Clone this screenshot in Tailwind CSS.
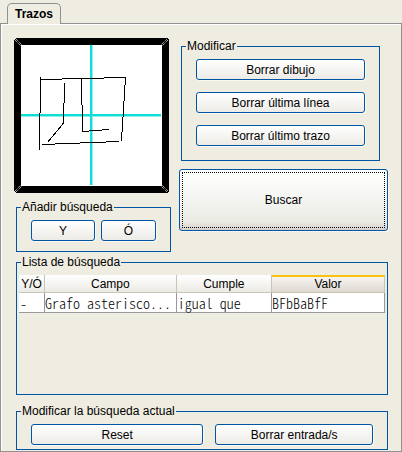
<!DOCTYPE html>
<html lang="es">
<head>
<meta charset="utf-8">
<title>Trazos</title>
<script src="https://cdn.jsdelivr.net/npm/@tailwindcss/browser@4"></script>
</head>
<body class="flex min-h-screen flex-col bg-[#efede1] pt-[3px] font-['Liberation_Sans',Arial,sans-serif] text-xs leading-[15px] text-black">
  <div role="tablist" class="relative z-10 -mb-px flex pl-[7px]">
    <button role="tab" aria-selected="true" class="h-[21px] rounded-t-[5px] border border-b-0 border-[#919191] bg-[#efede1] px-[7px] font-bold">Trazos</button>
  </div>
  <main role="tabpanel" class="flex grow flex-col border border-[#919191] pt-[14px] pr-[13px] pb-px pl-[13px] shadow-[inset_1px_1px_0_#fff]">
    <div class="grid grid-cols-[157px_1fr] gap-x-2">
      <div class="flex flex-col gap-[7px]">
        <svg role="img" aria-label="Dibujo" class="size-[155px]" viewBox="0 0 155 155" shape-rendering="crispEdges">
          <path d="M2 0H153L155 2V153L153 155H2L0 153V2Z" fill="#000"/>
          <rect x="7" y="7" width="141" height="141" fill="#fff"/>
          <path d="M77.5 7V147M7 77.5H147" stroke="#8ff0ee" stroke-width="3"/>
          <path d="M77 7V147M7 77H147" stroke="#10dcd8" stroke-width="2"/>
          <g fill="none" stroke="#f3f1e8" stroke-dasharray="1 1" shape-rendering="auto">
            <path d="M1 2L7 8M2 1L8 7M154 2L148 8M153 1L147 7M1 153L7 147M2 154L8 148M154 153L148 147M153 154L147 148"/>
          </g>
          <g fill="none" stroke="#000">
            <path d="M26.5 39V75M25.5 75V112M26 41.500H48M48 40.500H90M90 39.500H112"/>
            <path d="M111.500 39V47M110.500 47V63M109.500 63V79M108.500 79V94M107.500 94V103"/>
            <path d="M28 106.500H41M41 105.500H66M66 104.500H92M92 103.500H105"/>
            <path d="M50.500 45V65M49.500 65V86M49.500 85L45.500 90L33.500 104.500"/>
            <path d="M67.500 41V67M68.500 67V94M68 93.500H75M75 92.500H88M88 91.500H95"/>
          </g>
        </svg>
        <fieldset class="ml-[2px] flex gap-[6px] border border-[#0055a5] px-[14px] pt-[5px] pb-[10px]">
          <legend class="-ml-[10px] h-[15px] px-px">Añadir búsqueda</legend>
          <button class="h-[21px] flex-[64] rounded-[3px] border border-[#0055a5] bg-linear-to-b from-white to-[#ecebe6] pt-px shadow-[1px_1px_0_#fafaf5]">Y</button>
          <button class="h-[21px] flex-[55] rounded-[3px] border border-[#0055a5] bg-linear-to-b from-white to-[#ecebe6] pt-px shadow-[1px_1px_0_#fafaf5]">Ó</button>
        </fieldset>
      </div>
      <div class="flex flex-col gap-2 pt-px">
        <fieldset class="mr-2 ml-[2px] flex flex-col gap-3 border border-[#0055a5] px-[14px] pt-[5px] pb-[14px]">
          <legend class="-ml-[10px] h-[15px] px-px">Modificar</legend>
          <button class="h-[21px] rounded-[3px] border border-[#0055a5] bg-linear-to-b from-white to-[#ecebe6] pt-px shadow-[1px_1px_0_#fafaf5]">Borrar dibujo</button>
          <button class="h-[21px] rounded-[3px] border border-[#0055a5] bg-linear-to-b from-white to-[#ecebe6] pt-px shadow-[1px_1px_0_#fafaf5]">Borrar última línea</button>
          <button class="h-[21px] rounded-[3px] border border-[#0055a5] bg-linear-to-b from-white to-[#ecebe6] pt-px shadow-[1px_1px_0_#fafaf5]">Borrar último trazo</button>
        </fieldset>
        <button class="h-[62px] rounded-[3px] border border-[#0055a5] bg-linear-to-b from-white via-[#ecece6] via-85% to-[#d8d2c9] p-[2px] shadow-[1px_1px_0_#fafaf5]"><span class="flex h-full items-center justify-center border border-dotted border-black pt-px">Buscar</span></button>
      </div>
    </div>

    <fieldset class="mt-[3px] ml-[2px] min-h-[139px] grow border border-[#0055a5] px-[2px] pt-[5px]">
      <legend class="ml-[2px] h-[15px] px-px">Lista de búsqueda</legend>
      <table class="w-full table-fixed border-separate border-spacing-0 text-left">
        <colgroup><col class="w-[26px]"><col class="w-[36%]"><col class="w-[26%]"><col></colgroup>
        <thead>
          <tr class="h-[18px] text-center">
            <th scope="col" class="border-r border-b border-[#c9c5b4] bg-linear-to-b from-white to-[#ecebe6] p-0 pt-px font-normal">Y/Ó</th>
            <th scope="col" class="border-r border-b border-[#c9c5b4] bg-linear-to-b from-white to-[#ecebe6] p-0 pt-px font-normal">Campo</th>
            <th scope="col" class="border-r border-b border-[#c9c5b4] bg-linear-to-b from-white to-[#ecebe6] p-0 pt-px font-normal">Cumple</th>
            <th scope="col" class="border-t-2 border-r border-b border-[#c9c5b4] border-t-[#ffc20e] bg-linear-to-b from-[#f7f5f2] to-[#ddd8d0] p-0 font-normal">Valor</th>
          </tr>
        </thead>
        <tbody class="font-['Noto_Sans_CJK_JP',monospace] text-sm leading-[18px] font-light [font-feature-settings:'hwid']">
          <tr class="h-5 bg-white">
            <td class="border-r border-b border-[#999] p-0 pl-px">-</td>
            <td class="overflow-hidden border-r border-b border-[#999] p-0 whitespace-nowrap">Grafo asterisco...</td>
            <td class="border-r border-b border-[#999] p-0 pl-px whitespace-nowrap">igual que</td>
            <td class="border-r border-b border-[#999] p-0 whitespace-nowrap">BFbBaBfF</td>
          </tr>
        </tbody>
      </table>
    </fieldset>

    <fieldset class="mt-[9px] ml-[2px] flex gap-3 border border-[#0055a5] px-[14px] pt-[5px] pb-[4px]">
      <legend class="-ml-[10px] h-[15px] px-px">Modificar la búsqueda actual</legend>
      <button class="h-[21px] flex-[172] rounded-[3px] border border-[#0055a5] bg-linear-to-b from-white to-[#ecebe6] pt-px shadow-[1px_1px_0_#fafaf5]">Reset</button>
      <button class="h-[21px] flex-[157] rounded-[3px] border border-[#0055a5] bg-linear-to-b from-white to-[#ecebe6] pt-px shadow-[1px_1px_0_#fafaf5]">Borrar entrada/s</button>
    </fieldset>
  </main>
</body>
</html>
